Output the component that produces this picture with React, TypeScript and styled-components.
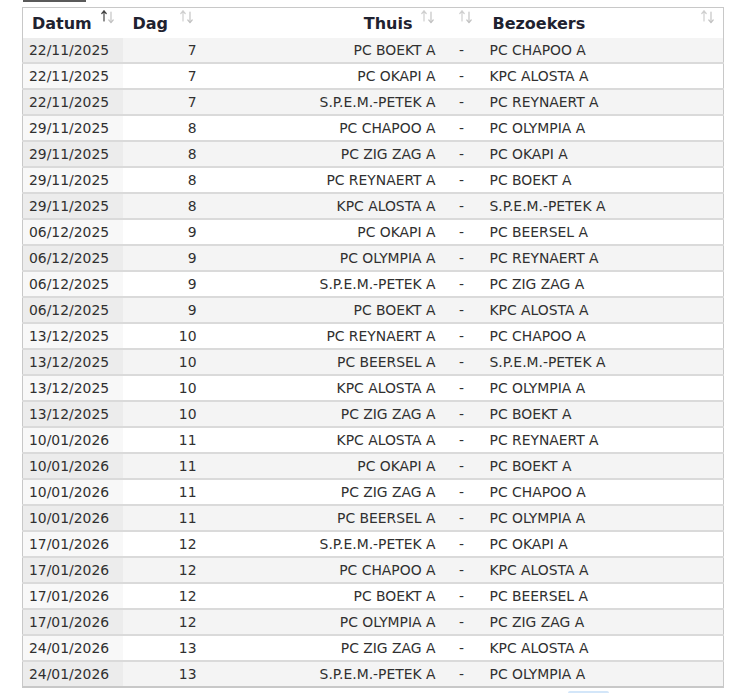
import React from "react";
import styled, { createGlobalStyle } from "styled-components";

const Global = createGlobalStyle`
  html, body { margin: 0; padding: 0; background: #fff; }
  body { font-family: "DejaVu Sans", Verdana, sans-serif; color: #222; }
`;

type Match = [string, number, string, string];

const rows: Match[] = [
  ["22/11/2025", 7, "PC BOEKT A", "PC CHAPOO A"],
  ["22/11/2025", 7, "PC OKAPI A", "KPC ALOSTA A"],
  ["22/11/2025", 7, "S.P.E.M.-PETEK A", "PC REYNAERT A"],
  ["29/11/2025", 8, "PC CHAPOO A", "PC OLYMPIA A"],
  ["29/11/2025", 8, "PC ZIG ZAG A", "PC OKAPI A"],
  ["29/11/2025", 8, "PC REYNAERT A", "PC BOEKT A"],
  ["29/11/2025", 8, "KPC ALOSTA A", "S.P.E.M.-PETEK A"],
  ["06/12/2025", 9, "PC OKAPI A", "PC BEERSEL A"],
  ["06/12/2025", 9, "PC OLYMPIA A", "PC REYNAERT A"],
  ["06/12/2025", 9, "S.P.E.M.-PETEK A", "PC ZIG ZAG A"],
  ["06/12/2025", 9, "PC BOEKT A", "KPC ALOSTA A"],
  ["13/12/2025", 10, "PC REYNAERT A", "PC CHAPOO A"],
  ["13/12/2025", 10, "PC BEERSEL A", "S.P.E.M.-PETEK A"],
  ["13/12/2025", 10, "KPC ALOSTA A", "PC OLYMPIA A"],
  ["13/12/2025", 10, "PC ZIG ZAG A", "PC BOEKT A"],
  ["10/01/2026", 11, "KPC ALOSTA A", "PC REYNAERT A"],
  ["10/01/2026", 11, "PC OKAPI A", "PC BOEKT A"],
  ["10/01/2026", 11, "PC ZIG ZAG A", "PC CHAPOO A"],
  ["10/01/2026", 11, "PC BEERSEL A", "PC OLYMPIA A"],
  ["17/01/2026", 12, "S.P.E.M.-PETEK A", "PC OKAPI A"],
  ["17/01/2026", 12, "PC CHAPOO A", "KPC ALOSTA A"],
  ["17/01/2026", 12, "PC BOEKT A", "PC BEERSEL A"],
  ["17/01/2026", 12, "PC OLYMPIA A", "PC ZIG ZAG A"],
  ["24/01/2026", 13, "PC ZIG ZAG A", "KPC ALOSTA A"],
  ["24/01/2026", 13, "S.P.E.M.-PETEK A", "PC OLYMPIA A"],
];

const Page = styled.div`
  padding-left: 22px;
  display: flex;
  flex-direction: column;
  align-items: flex-start;
`;

const TopButtonEdge = styled.div`
  width: 63px;
  height: 2px;
  margin-left: 1px;
  background: #5a5a5a;
  margin-bottom: 5px;
`;

const Table = styled.table`
  width: 702px;
  table-layout: fixed;
  border-collapse: collapse;
  border: 1px solid #c8c8c8;
  border-bottom-width: 2px;
  font-size: 13.9px;
`;

const HeadCell = styled.th<{ $align?: "left" | "right"; $pl?: number }>`
  position: relative;
  height: 29px;
  padding: 1px ${(p) => (p.$align === "right" ? "30px" : "10px")} 0
    ${(p) => (p.$align === "right" ? 0 : p.$pl ?? 10)}px;
  text-align: ${(p) => p.$align ?? "left"};
  font-size: 16px;
  font-weight: bold;
  color: #1f2230;
  background: #fff;
  vertical-align: middle;
`;

const SortIcon = styled.svg`
  position: absolute;
  right: 8px;
  top: 1px;
  width: 14px;
  height: 16px;
`;

const Row = styled.tr<{ $odd: boolean }>`
  background: ${(p) => (p.$odd ? "#f4f4f4" : "#ffffff")};
  border-bottom: 2px solid #dadada;
  &:last-child { border-bottom: none; }
`;

const Cell = styled.td<{
  $align?: "left" | "right" | "center";
  $sorted?: boolean;
  $odd?: boolean;
  $pl?: number;
  $pr?: number;
}>`
  height: 24px;
  padding: 0 ${(p) => p.$pr ?? 5}px 0 ${(p) => p.$pl ?? 6}px;
  text-align: ${(p) => p.$align ?? "left"};
  white-space: nowrap;
  color: #303030;
  background: ${(p) => (p.$sorted ? (p.$odd ? "#ececec" : "#f8f8f8") : "transparent")};
  vertical-align: middle;
`;

const Pager = styled.div`
  width: 702px;
  display: flex;
  margin-top: 3px;
  padding-left: 546px;
  box-sizing: border-box;
`;

const PageButton = styled.div`
  width: 41px;
  height: 20px;
  background: #d3e6f9;
  border-radius: 2px;
`;

const Arrows: React.FC<{ active?: boolean }> = ({ active }) => (
  <SortIcon viewBox="0 0 14 16">
    <g fill="none" strokeWidth="1.2" strokeLinecap="round">
      <g stroke={active ? "#444" : "#cfcfcf"}>
        <line x1="3" y1="2" x2="3" y2="12" />
        <polyline points="0.8,4.5 3,2 5.2,4.5" />
      </g>
      <g stroke="#c4c4c4">
        <line x1="10" y1="3" x2="10" y2="13.5" />
        <polyline points="7.8,11 10,13.5 12.2,11" />
      </g>
    </g>
  </SortIcon>
);

export default function App() {
  return (
    <>
      <Global />
      <Page>
        <TopButtonEdge />
        <Table>
          <colgroup>
            <col style={{ width: 100 }} />
            <col style={{ width: 79 }} />
            <col style={{ width: 241 }} />
            <col style={{ width: 38 }} />
            <col />
          </colgroup>
          <thead>
            <tr>
              <HeadCell $pl={9}>
                Datum
                <Arrows active />
              </HeadCell>
              <HeadCell>
                Dag
                <Arrows />
              </HeadCell>
              <HeadCell $align="right">
                Thuis
                <Arrows />
              </HeadCell>
              <HeadCell>
                <Arrows />
              </HeadCell>
              <HeadCell $pl={12}>
                Bezoekers
                <Arrows />
              </HeadCell>
            </tr>
          </thead>
          <tbody>
            {rows.map(([date, day, home, away], i) => {
              const odd = i % 2 === 0;
              return (
                <Row key={i} $odd={odd}>
                  <Cell $sorted $odd={odd}>{date}</Cell>
                  <Cell $align="right" $pr={5}>{day}</Cell>
                  <Cell $align="right" $pr={7}>{home}</Cell>
                  <Cell $align="center" $pl={0} $pr={0}>-</Cell>
                  <Cell $pl={9}>{away}</Cell>
                </Row>
              );
            })}
          </tbody>
        </Table>
        <Pager>
          <PageButton />
        </Pager>
      </Page>
    </>
  );
}
